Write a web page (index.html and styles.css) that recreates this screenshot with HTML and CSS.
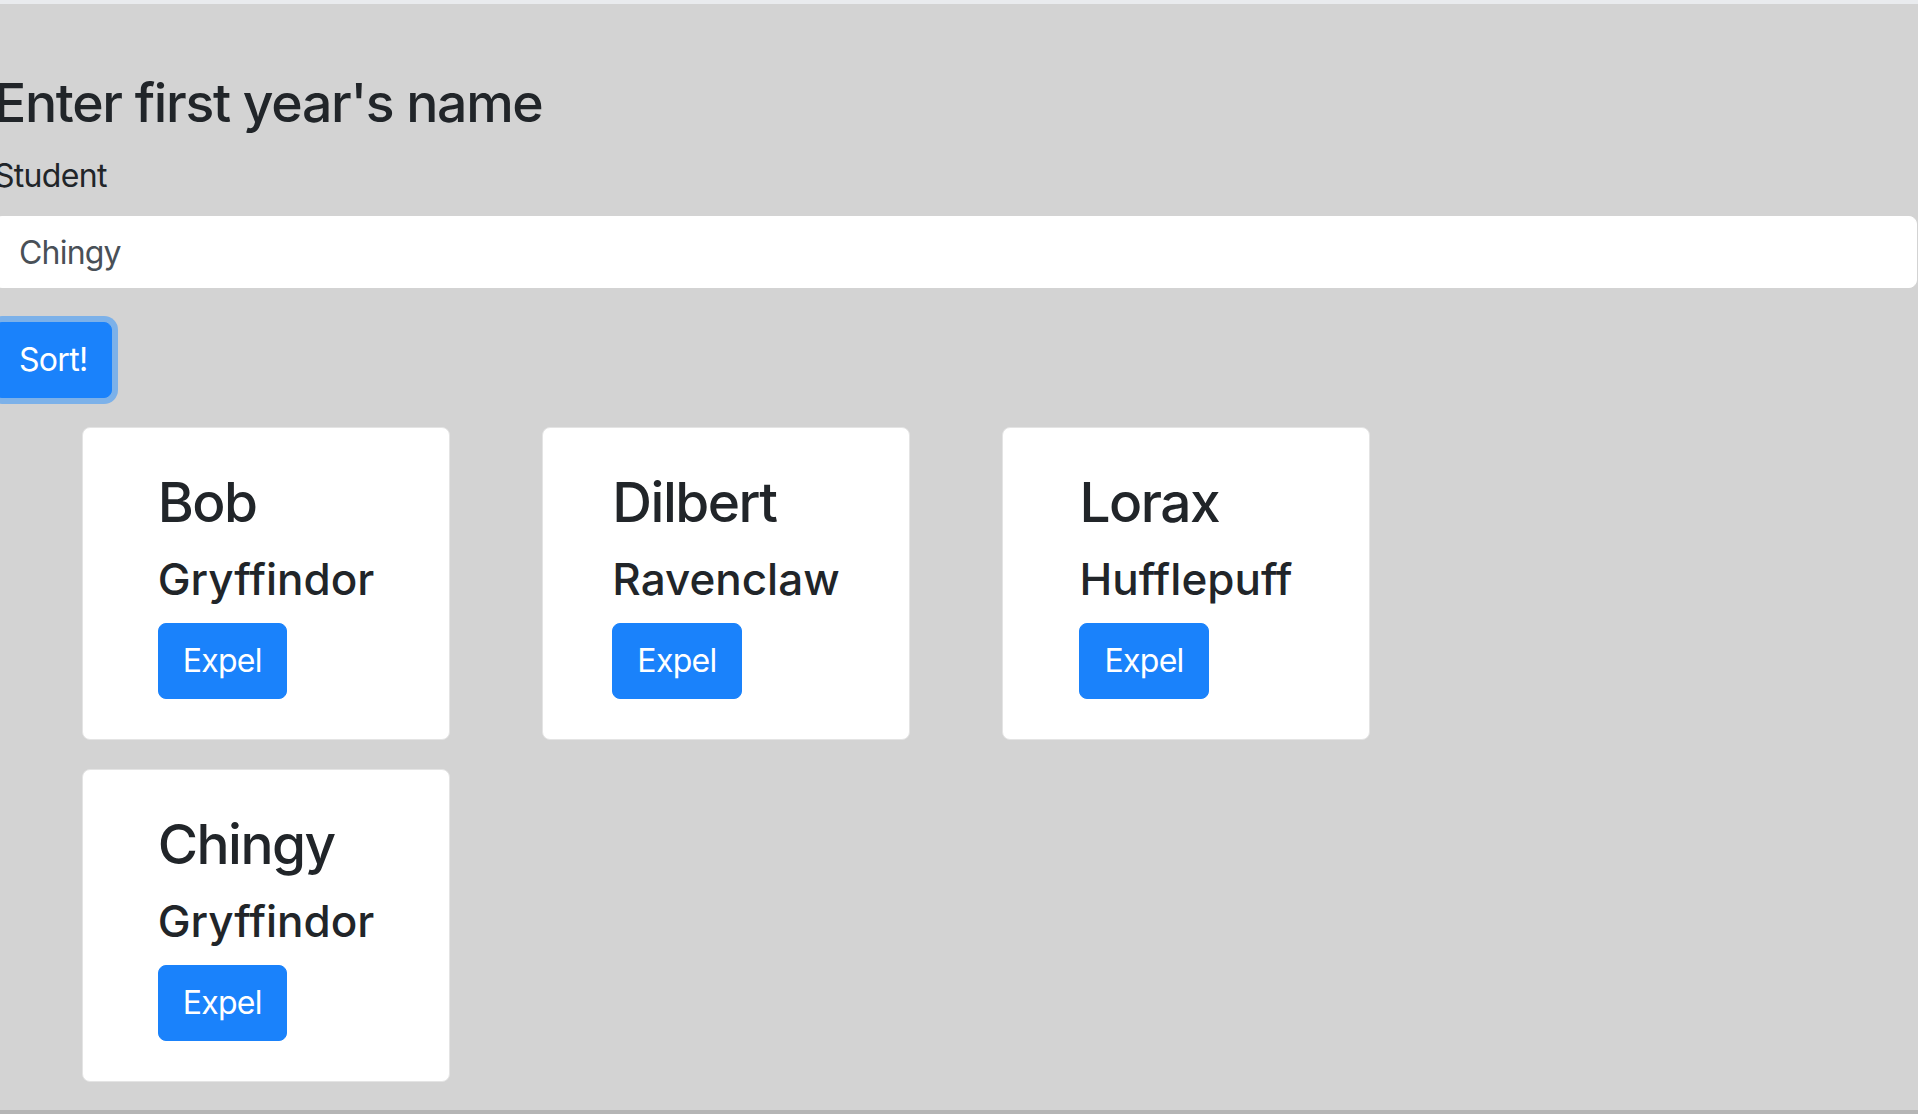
FILE: index.html
```html
<!DOCTYPE html>
<html lang="en">
<head>
<meta charset="utf-8">
<title>Sorting Hat</title>
<link rel="stylesheet" href="styles.css">
</head>
<body>
<div class="topbar"></div>
<main class="page">
  <h3 class="title">Enter first year's name</h3>
  <div class="form-group">
    <label class="label" for="student">Student</label>
    <input class="input" id="student" type="text" value="Chingy">
  </div>
  <button class="btn sort">Sort!</button>
  <div class="cards">
    <div class="card"><div class="card-body"><h3 class="name">Bob</h3><h4 class="house">Gryffindor</h4><button class="btn">Expel</button></div></div>
    <div class="card"><div class="card-body"><h3 class="name">Dilbert</h3><h4 class="house">Ravenclaw</h4><button class="btn">Expel</button></div></div>
    <div class="card"><div class="card-body"><h3 class="name">Lorax</h3><h4 class="house">Hufflepuff</h4><button class="btn">Expel</button></div></div>
    <div class="card"><div class="card-body"><h3 class="name">Chingy</h3><h4 class="house">Gryffindor</h4><button class="btn">Expel</button></div></div>
  </div>
</main>
<div class="bottombar"></div>
</body>
</html>
```
FILE: styles.css
```css
* { box-sizing: border-box; }
html, body { margin: 0; padding: 0; }
body {
  background: #d3d3d3;
  font-family: Inter, "Noto Sans", sans-serif;
  color: #212529;
  height: 1114px;
  overflow: hidden;
  display: flex;
  flex-direction: column;
}
.topbar { height: 4px; background: #e9ebee; flex: none; }
.bottombar { height: 4px; background: #b5b5b5; flex: none; }
.page {
  flex: 1;
  padding-top: 65px;
  margin-left: -6px;
  margin-right: 1px;
}
.title {
  font-size: 53.5px;
  font-weight: 500;
  line-height: 67px;
  letter-spacing: -1.3px;
  margin: 0 0 16px;
}
.form-group { margin-bottom: 34px; }
.label {
  display: block;
  font-size: 32px;
  line-height: 48px;
  letter-spacing: -0.7px;
  margin-bottom: 16px;
}
.input {
  display: block;
  width: 100%;
  height: 72px;
  padding: 0 24px;
  font-family: inherit;
  font-size: 32px;
  letter-spacing: -0.8px;
  color: #495057;
  background: #fff;
  border: 1px solid #fff;
  border-radius: 8px;
  outline: none;
}
.btn {
  display: inline-block;
  font-family: inherit;
  font-size: 32px;
  line-height: 48px;
  letter-spacing: -0.7px;
  padding: 13px 24px;
  color: #fff;
  background: #1a82fb;
  border: 1px solid #1a82fb;
  border-radius: 8px;
}
.sort { box-shadow: 0 0 0 6px rgba(38, 143, 255, 0.5); }
.cards {
  display: grid;
  grid-template-columns: repeat(3, 368px);
  column-gap: 92px;
  row-gap: 29px;
  margin-top: 29px;
  margin-left: 88px;
}
.card {
  background: #fff;
  border: 1px solid #e4e4e4;
  border-radius: 8px;
  padding: 40px 0;
  display: flex;
  justify-content: center;
}
.card-body { display: flex; flex-direction: column; align-items: flex-start; }
.name {
  font-size: 55px;
  font-weight: 500;
  line-height: 68px;
  letter-spacing: -1.5px;
  margin: 0 0 16px;
}
.house {
  font-size: 44px;
  font-weight: 500;
  line-height: 55px;
  margin: 0 0 16px;
}
```
